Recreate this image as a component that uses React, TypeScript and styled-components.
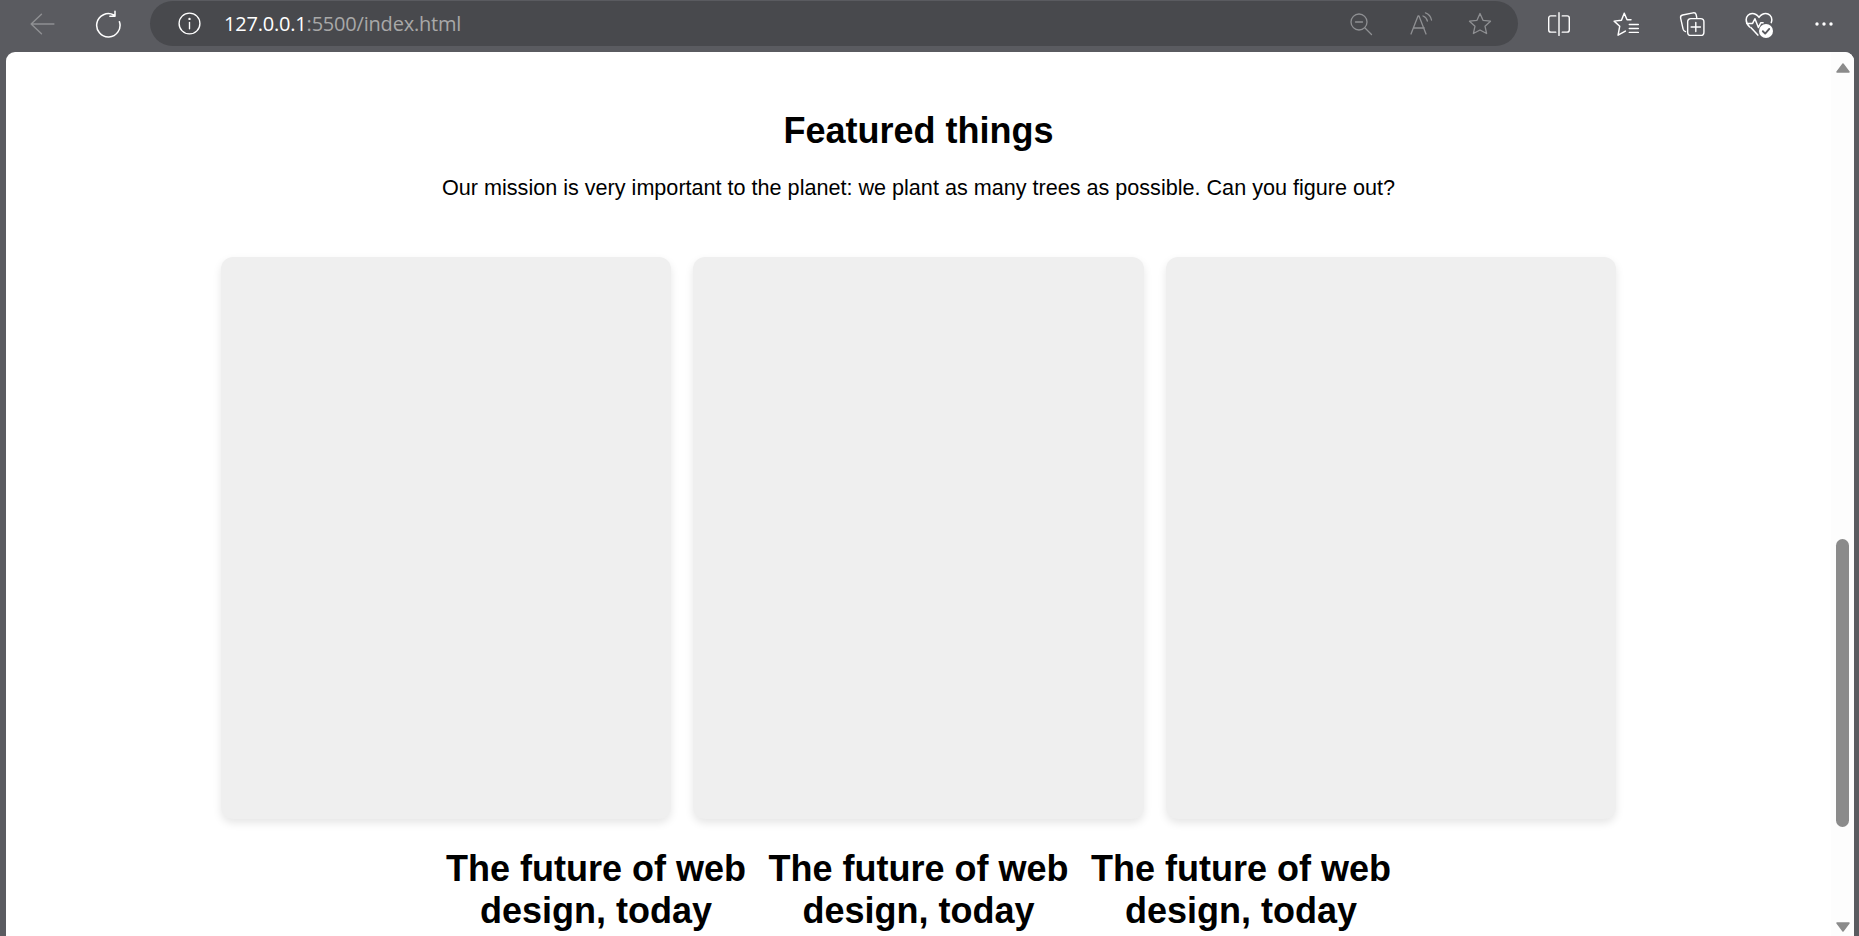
import React from "react";
import styled, { createGlobalStyle } from "styled-components";

const Global = createGlobalStyle`
  html, body { margin: 0; padding: 0; height: 100%; overflow: hidden; }
  body { font-family: "Liberation Sans", Arial, sans-serif; background: #5a5b60; }
  #root { height: 100%; }
`;

const Shell = styled.div`
  height: 936px;
  display: flex;
  flex-direction: column;
  background: #5a5b60;
  overflow: hidden;
`;

const Toolbar = styled.header`
  height: 52px;
  flex: none;
  display: flex;
  align-items: flex-start;
  padding-top: 1px;
  box-sizing: border-box;
`;

const NavSlot = styled.div<{ $w: number }>`
  width: ${(p) => p.$w}px;
  height: 46px;
  flex: none;
  display: flex;
  align-items: center;
  justify-content: center;
`;

const AddressPill = styled.div`
  width: 1368px;
  height: 45px;
  flex: none;
  display: flex;
  align-items: center;
  background: #48494d;
  border-radius: 23px;
  padding-left: 27px;
  padding-right: 20px;
  box-sizing: border-box;
`;

const Url = styled.div`
  margin-left: 22px;
  font-family: "Open Sans", sans-serif;
  font-size: 20px;
  letter-spacing: -0.2px;
  color: #a8a8a8;
  white-space: nowrap;
  flex: 1;
`;

const Host = styled.span`
  color: #ffffff;
`;

const PillIcons = styled.div`
  display: flex;
  align-items: center;
  gap: 35.5px;
  margin-right: 6px;
`;

const ToolIcons = styled.div`
  display: flex;
  align-items: center;
  height: 46px;
  margin-left: 26px;
`;

const Viewport = styled.div`
  flex: 1;
  min-height: 0;
  margin: 0 5px 0 6px;
  display: flex;
  background: #ffffff;
  border-radius: 9px 9px 0 0;
  overflow: hidden;
`;

const Page = styled.main`
  flex: 1;
  min-width: 0;
  color: #000;
  padding-top: 58px;
  display: flex;
  flex-direction: column;
  align-items: center;
`;

const Heading = styled.h2`
  margin: 0;
  font-size: 36px;
  line-height: 41px;
  font-weight: 700;
  text-align: center;
`;

const Lead = styled.p`
  margin: 25px 0 0;
  font-size: 21.6px;
  line-height: 23px;
  text-align: center;
`;

const Cards = styled.section`
  margin-top: 58px;
  width: 1395px;
  display: flex;
  gap: 22px;
`;

const Card = styled.div`
  flex: 1;
  height: 562px;
  background: #efefef;
  border-radius: 12px;
  box-shadow: 0 4px 8px rgba(0, 0, 0, 0.1);
`;

const Titles = styled.section`
  margin-top: 29px;
  display: flex;
  justify-content: center;
`;

const Title = styled.h3`
  margin: 0;
  width: 322.5px;
  font-size: 36px;
  line-height: 42px;
  font-weight: 700;
  text-align: center;
`;

const Scrollbar = styled.aside`
  width: 23px;
  flex: none;
  background: #fdfdfd;
  display: flex;
  flex-direction: column;
  align-items: center;
  padding-top: 11px;
  box-sizing: border-box;
`;

const Thumb = styled.div`
  width: 13px;
  height: 288px;
  margin-top: 466px;
  border-radius: 7px;
  background: #8b8b8b;
`;

const ArrowSlot = styled.div<{ $push?: boolean }>`
  display: flex;
  margin-top: ${(p) => (p.$push ? "95px" : "0")};
`;

type IconProps = { c?: string; size?: number; children: React.ReactNode };
const Ico = ({ c = "#fff", size = 24, children }: IconProps) => (
  <svg width={size} height={size} viewBox="0 0 24 24" fill="none" stroke={c} strokeWidth={1.3} strokeLinecap="round" strokeLinejoin="round">
    {children}
  </svg>
);

const DIM = "#8f9093";

export default function App() {
  return (
    <Shell>
      <Global />
      <Toolbar>
        <NavSlot $w={84}>
          <Ico c={DIM} size={26}><path d="M2 12h21M11.5 3 2 12l9.5 9" /></Ico>
        </NavSlot>
        <NavSlot $w={48}>
          <Ico size={28}><path d="M17 4.300A10 10 0 1 0 21.800 10M18 1v4.300h-4.400" /></Ico>
        </NavSlot>
        <NavSlot $w={18} />
        <AddressPill>
          <Ico size={25}>
            <circle cx="12" cy="12" r="10" />
            <path d="M12 11v6" />
            <circle cx="12" cy="7.600" r=".5" fill="#fff" />
          </Ico>
          <Url><Host>127.0.0.1</Host>:5500/index.html</Url>
          <PillIcons>
            <Ico c={DIM}><circle cx="10" cy="10" r="8" /><path d="M6.500 10h7M16 16l6.500 6.500" /></Ico>
            <Ico c={DIM}><path d="M2 22 9 4h1l7 18M4.800 16h10.500M14 4c2.400.8 3.800 2.500 4.400 5M16.500 0.800c3 1 5.300 3.600 6 7.200" /></Ico>
            <Ico c={DIM}><path d="m12 1.500 3 6.800 7.500.9-5.500 5 1.600 7.300L12 18l-6.600 3.500L7 14.200l-5.500-5 7.500-.9z" /></Ico>
          </PillIcons>
        </AddressPill>
        <ToolIcons>
          <NavSlot $w={30}>
            <Ico size={26}><path d="M9 4.500H4.500a2 2 0 0 0-2 2v11a2 2 0 0 0 2 2H9M15 4.500h4.500a2 2 0 0 1 2 2v11a2 2 0 0 1-2 2H15M12 1.500v21" /></Ico>
          </NavSlot>
          <NavSlot $w={37} />
          <NavSlot $w={30}>
            <Ico size={27}><path d="M10 2 7.500 8.200 1 9l5 4.500-1.500 8 6.500-3.700M10 2l2.500 5.800H16M14.500 12h8M14.500 15.500h8M14.500 19h8" /></Ico>
          </NavSlot>
          <NavSlot $w={36} />
          <NavSlot $w={30}>
            <Ico size={26}>
              <path d="M6 19c-1.200-.4-1.900-1-2.200-2.200L1.500 6.500C1.200 5 2 4 3.400 3.700l9.600-2c1.400-.3 2.400.3 2.800 1.600l.6 2.700" />
              <rect x="8" y="7" width="15" height="15.500" rx="3" />
              <path d="M15.500 10.500v8.500M11.200 14.800h8.600" />
            </Ico>
          </NavSlot>
          <NavSlot $w={37} />
          <NavSlot $w={30}>
            <Ico size={28}>
              <path d="M4 14.500C2 12.500 1 10.800 1 8.300 1 5.200 3.500 3 6.200 3c2.300 0 4.300 1.200 5.800 3.300C13.500 4.200 15.500 3 17.800 3 20.500 3 23 5.200 23 8.300c0 1-.2 1.700-.5 2.500" />
              <path d="M1.500 11.500h5l2-4 3 7.500 2-4h2M5 15l6 6.500" />
              <circle cx="18" cy="18" r="6" fill="#fff" stroke="none" />
              <path d="m15.300 18.200 2 2 3.500-4" stroke="#5a5b60" strokeWidth="1.600" />
            </Ico>
          </NavSlot>
          <NavSlot $w={35} />
          <NavSlot $w={30}>
            <Ico>
              <circle cx="5" cy="12" r="1.700" fill="#fff" stroke="none" />
              <circle cx="12" cy="12" r="1.700" fill="#fff" stroke="none" />
              <circle cx="19" cy="12" r="1.700" fill="#fff" stroke="none" />
            </Ico>
          </NavSlot>
        </ToolIcons>
      </Toolbar>
      <Viewport>
        <Page>
          <Heading>Featured things</Heading>
          <Lead>Our mission is very important to the planet: we plant as many trees as possible. Can you figure out?</Lead>
          <Cards>
            <Card />
            <Card />
            <Card />
          </Cards>
          <Titles>
            <Title>The future of web design, today</Title>
            <Title>The future of web design, today</Title>
            <Title>The future of web design, today</Title>
          </Titles>
        </Page>
        <Scrollbar>
          <ArrowSlot>
            <svg width="14" height="10" viewBox="0 0 14 10"><path d="M7 1 13 9H1z" fill="#8b8b8b" stroke="#8b8b8b" strokeWidth="1.500" strokeLinejoin="round" /></svg>
          </ArrowSlot>
          <Thumb />
          <ArrowSlot $push>
            <svg width="14" height="10" viewBox="0 0 14 10"><path d="M7 9 13 1H1z" fill="#8b8b8b" stroke="#8b8b8b" strokeWidth="1.500" strokeLinejoin="round" /></svg>
          </ArrowSlot>
        </Scrollbar>
      </Viewport>
    </Shell>
  );
}
